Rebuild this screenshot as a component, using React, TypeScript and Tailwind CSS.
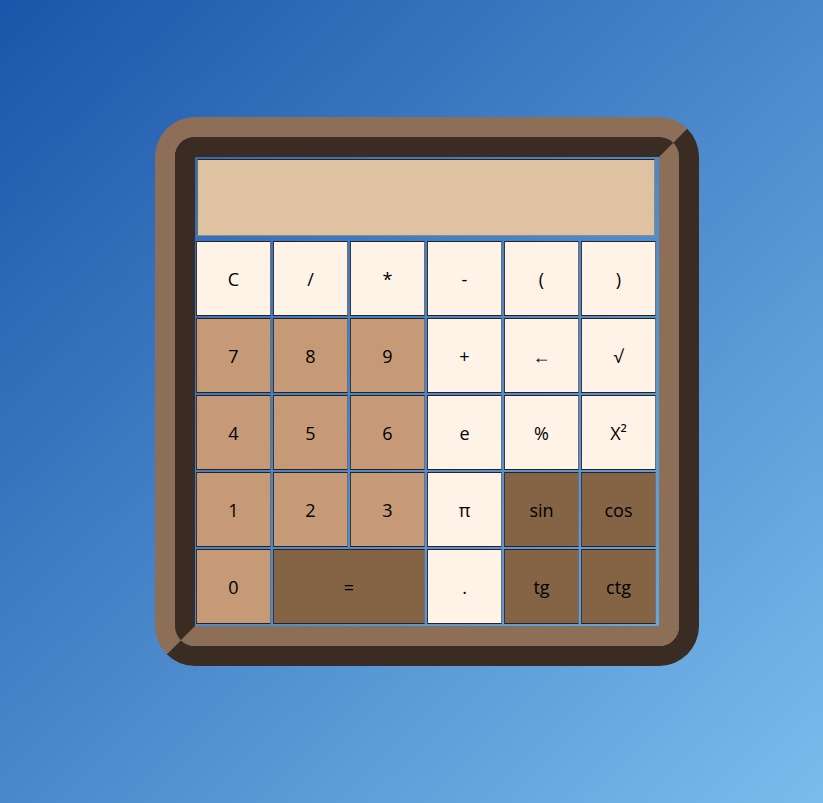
import React from "react";

type K = { t: string; c: "l" | "t" | "d"; span?: boolean };

const rows: K[] = [
  { t: "C", c: "l" }, { t: "/", c: "l" }, { t: "*", c: "l" }, { t: "-", c: "l" }, { t: "(", c: "l" }, { t: ")", c: "l" },
  { t: "7", c: "t" }, { t: "8", c: "t" }, { t: "9", c: "t" }, { t: "+", c: "l" }, { t: "←", c: "l" }, { t: "√", c: "l" },
  { t: "4", c: "t" }, { t: "5", c: "t" }, { t: "6", c: "t" }, { t: "e", c: "l" }, { t: "%", c: "l" }, { t: "X²", c: "l" },
  { t: "1", c: "t" }, { t: "2", c: "t" }, { t: "3", c: "t" }, { t: "π", c: "l" }, { t: "sin", c: "d" }, { t: "cos", c: "d" },
  { t: "0", c: "t" }, { t: "=", c: "d", span: true }, { t: ".", c: "l" }, { t: "tg", c: "d" }, { t: "ctg", c: "d" },
];

const bg = { l: "bg-[#fff2e6]", t: "bg-[#c69a77]", d: "bg-[#856446]" };

export default function App() {
  return (
    <div
      className="min-h-screen w-full bg-gradient-to-br from-[#1b55a9] to-[#7bbcec] pl-[155px] pt-[117px]"
      style={{ fontFamily: '"Open Sans", "Noto Sans", sans-serif' }}
    >
      <div className="w-[544px] h-[549px] rounded-[40px] border-[20px] border-t-[#8d6e57] border-l-[#8d6e57] border-b-[#3b2c23] border-r-[#3b2c23]">
        <div className="w-full h-full rounded-[20px] border-[20px] border-t-[#3b2c23] border-l-[#3b2c23] border-b-[#8d6e57] border-r-[#8d6e57]">
          <div className="pt-[2px] pl-[1px]">
            <div className="ml-[1px] w-[458px] h-[77px] bg-[#dfc2a2] border border-t-[#2a2220] border-l-[#6a6a6a] border-r-[#8a8a8a] border-b-[#8a8a8a]" />
            <div className="mt-[5px] grid grid-cols-[repeat(6,75px)] auto-rows-[75px] gap-[2px]">
              {rows.map((k, i) => (
                <div
                  key={i}
                  className={`${bg[k.c]} ${k.span ? "col-span-2" : ""} flex items-center justify-center pt-[2px] text-[18px] text-black border border-t-[#2a2220] border-l-[#3a3333] border-b-[#2a2220] border-r-[#707070]`}
                >
                  {k.t}
                </div>
              ))}
            </div>
          </div>
        </div>
      </div>
    </div>
  );
}
